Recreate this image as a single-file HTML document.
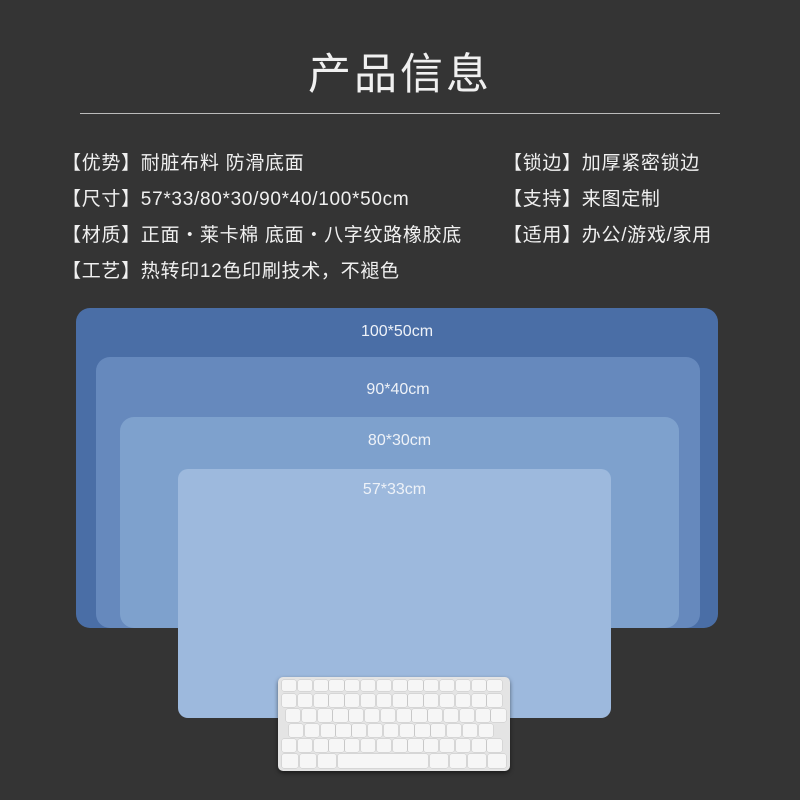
<!DOCTYPE html>
<html><head><meta charset="utf-8"><style>
body{margin:0;width:800px;height:800px;background:#343434;position:relative;overflow:hidden;font-family:"Liberation Sans","Noto Sans CJK SC",sans-serif;}
.t{position:absolute;left:0;width:800px;top:40px;text-align:center;color:#f0f0f0;font-size:43px;letter-spacing:3px;}
.line{position:absolute;left:80px;width:640px;top:113px;height:1px;background:#bbb;}
.r{position:absolute;color:#f0f0f0;font-size:19px;white-space:nowrap;letter-spacing:0.7px;}
.b{position:absolute;border-radius:14px;}
.lb{position:absolute;left:0;width:100%;text-align:center;color:#eef2f8;font-size:16px;font-family:"Liberation Sans Narrow","Liberation Sans",sans-serif;}
.kb{position:absolute;left:278px;top:677px;width:232px;height:94px;background:#e4e4e4;border-radius:5px;box-shadow:0 2px 4px rgba(0,0,0,.5);}
.k{position:absolute;background:#f6f6f6;border-radius:2px;box-shadow:0 0 0 .5px #c8c8c8;}
</style></head><body>
<div class="t">产品信息</div>
<div class="line"></div>
<div class="r" style="left:62px;top:148px">【优势】耐脏布料 防滑底面</div>
<div class="r" style="left:62px;top:184px">【尺寸】57*33/80*30/90*40/100*50cm</div>
<div class="r" style="left:62px;top:220px">【材质】正面・莱卡棉 底面・八字纹路橡胶底</div>
<div class="r" style="left:62px;top:256px">【工艺】热转印12色印刷技术，不褪色</div>
<div class="r" style="left:503px;top:148px">【锁边】加厚紧密锁边</div>
<div class="r" style="left:503px;top:184px">【支持】来图定制</div>
<div class="r" style="left:503px;top:220px">【适用】办公/游戏/家用</div>

<div class="b" style="left:76px;top:308px;width:642px;height:320px;background:#4a6ea6"><div class="lb" style="top:15px">100*50cm</div></div>
<div class="b" style="left:96px;top:357px;width:604px;height:271px;background:#6689bd"><div class="lb" style="top:24px">90*40cm</div></div>
<div class="b" style="left:120px;top:417px;width:559px;height:211px;background:#7ea1cd"><div class="lb" style="top:15px">80*30cm</div></div>
<div class="b" style="left:178px;top:469px;width:433px;height:249px;background:#9db9dd;border-radius:10px"><div class="lb" style="top:12px">57*33cm</div></div>

<div class="kb" id="kb"></div>
<script>
var kb=document.getElementById('kb');
function k(x,y,w,h){var d=document.createElement('div');d.className='k';d.style.left=x+'px';d.style.top=y+'px';d.style.width=w+'px';d.style.height=h+'px';kb.appendChild(d);}
var kw=14.2,g=1.6;
for(var i=0;i<14;i++)k(4+i*(kw+g),3,kw,11);
for(var r=0;r<4;r++){for(var i=0;i<14;i++){var x=4+i*(kw+g)+(r==1?4:r==2?7:r==3?0:0);if(x+kw>228)break;k(x,17+r*15,kw,13);}}
k(4,77,16,14);k(22,77,16,14);k(40,77,18,14);k(60,77,90,14);k(152,77,18,14);k(172,77,16,14);k(190,77,18,14);k(210,77,18,14);
</script>
</body></html>
